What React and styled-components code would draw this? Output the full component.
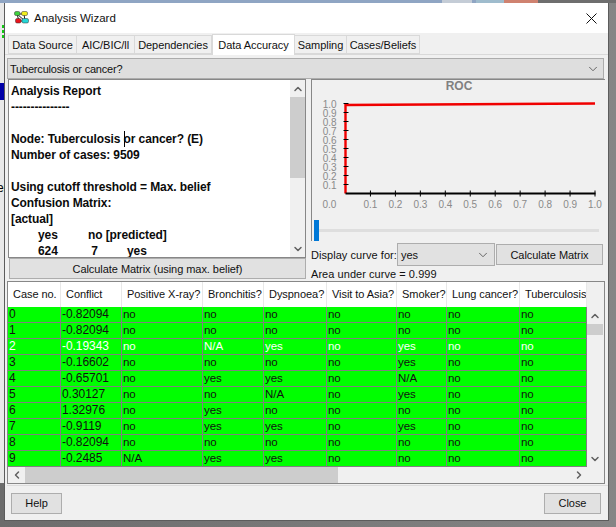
import React from 'react';
import styled, { createGlobalStyle } from 'styled-components';
import { ChevronUp, ChevronDown, ChevronLeft, ChevronRight } from 'lucide-react';

const tabs = ['Data Source', 'AIC/BIC/ll', 'Dependencies', 'Data Accuracy', 'Sampling', 'Cases/Beliefs'];
const tabWidths = [69, 58, 77, 83, 52, 73];

const columns = [
  { name: 'Case no.', width: 53 },
  { name: 'Conflict', width: 61 },
  { name: 'Positive X-ray?', width: 81 },
  { name: 'Bronchitis?', width: 61 },
  { name: 'Dyspnoea?', width: 63 },
  { name: 'Visit to Asia?', width: 70 },
  { name: 'Smoker?', width: 50 },
  { name: 'Lung cancer?', width: 73 },
  { name: 'Tuberculosis?', width: 67 },
];
const gridColumns = columns.map((c) => `${c.width}px`).join(' ');

const rows = [
  ['0', '-0.82094', 'no', 'no', 'no', 'no', 'no', 'no', 'no'],
  ['1', '-0.82094', 'no', 'no', 'no', 'no', 'no', 'no', 'no'],
  ['2', '-0.19343', 'no', 'N/A', 'yes', 'no', 'yes', 'no', 'no'],
  ['3', '-0.16602', 'no', 'no', 'no', 'no', 'yes', 'no', 'no'],
  ['4', '-0.65701', 'no', 'yes', 'yes', 'no', 'N/A', 'no', 'no'],
  ['5', '0.30127', 'no', 'no', 'N/A', 'no', 'yes', 'no', 'no'],
  ['6', '1.32976', 'no', 'yes', 'no', 'no', 'no', 'no', 'no'],
  ['7', '-0.9119', 'no', 'yes', 'yes', 'no', 'yes', 'no', 'no'],
  ['8', '-0.82094', 'no', 'no', 'no', 'no', 'no', 'no', 'no'],
  ['9', '-0.2485', 'N/A', 'yes', 'yes', 'no', 'no', 'no', 'no'],
];

const GlobalStyle = createGlobalStyle`
  html, body {
    margin: 0;
    padding: 0;
    background: #787878;
  }
  * {
    box-sizing: border-box;
  }
  body {
    font-family: "Liberation Sans", Arial, sans-serif;
    font-size: 11px;
    letter-spacing: -0.05px;
    color: #000;
  }
`;

const Desktop = styled.div`
  position: relative;
  width: 616px;
  height: 527px;
  padding: 3px 0 0 4px;
  overflow: hidden;
  background: linear-gradient(90deg, #6c6c6c 0, #858585 100%);
`;

const TopStrip = styled.div`
  position: absolute;
  top: 0;
  left: 0;
  width: 100%;
  height: 3px;
  background: linear-gradient(
    90deg,
    #8fa5c3 0 442px,
    #c4ccd6 442px 472px,
    #8fa5c3 472px 476px,
    #9fbccd 476px 504px,
    #cf8270 504px 538px,
    #6e6e6e 538px
  );
`;

const LeftStrip = styled.div`
  position: absolute;
  top: 3px;
  left: 0;
  width: 4px;
  height: 480px;
  background: #e9e9e9;
`;

const GreenDots = styled.div`
  position: absolute;
  top: 22px;
  left: 2px;
  width: 2px;
  height: 14px;
  background: repeating-linear-gradient(180deg, #12c912 0 3px, transparent 3px 5px);
`;

const BlueBar = styled.div`
  position: absolute;
  top: 80px;
  left: 0;
  width: 4px;
  height: 17px;
  background: #0000a8;
`;

const StrayText = styled.div`
  position: absolute;
  top: 178px;
  left: -3px;
  width: 7px;
  overflow: hidden;
  font-size: 12px;
`;

const Window = styled.div`
  width: 605px;
  height: 518px;
  background: #f0f0f0;
  border: 1px solid #5c5c5c;
  border-top: none;
  display: flex;
  flex-direction: column;
`;

const TitleBar = styled.div`
  height: 30px;
  flex: none;
  background: #fff;
  display: flex;
  align-items: center;
  padding: 0 11px 0 9px;
`;

const TitleText = styled.span`
  margin-left: 4px;
  flex: 1;
  font-size: 11.5px;
  letter-spacing: 0;
  color: #111;
`;

const TabStrip = styled.div`
  height: 21px;
  flex: none;
  display: flex;
  align-items: flex-end;
  padding-left: 3px;
  position: relative;
  z-index: 1;
`;

const Tab = styled.div`
  width: ${(p) => p.$width}px;
  height: ${(p) => (p.$active ? 21 : 19)}px;
  margin-bottom: ${(p) => (p.$active ? -1 : 0)}px;
  background: ${(p) => (p.$active ? '#fff' : '#f0f0f0')};
  border: 1px solid #d9d9d9;
  border-bottom: ${(p) => (p.$active ? 'none' : '1px solid #d9d9d9')};
  border-left: ${(p) => (p.$first || p.$active ? '1px solid #d9d9d9' : 'none')};
  display: flex;
  align-items: center;
  justify-content: center;
  padding-top: ${(p) => (p.$active ? 0 : 1)}px;
  white-space: nowrap;
  color: #111;
`;

const TabPanel = styled.div`
  flex: 1;
  min-height: 0;
  padding: 3px 0 0 2px;
  border-top: 1px solid #d9d9d9;
  display: flex;
  flex-direction: column;
`;

const NodeSelect = styled.div`
  width: 597px;
  height: 21px;
  flex: none;
  background: #dedede;
  border: 1px solid #acacac;
  display: flex;
  align-items: center;
  justify-content: space-between;
  padding: 0 3px 0 2px;
  letter-spacing: -0.2px;
  color: #111;
`;

const TopRow = styled.div`
  display: flex;
  gap: 5px;
  padding-left: 1px;
  height: 201px;
  flex: none;
`;

const ReportColumn = styled.div`
  width: 298px;
  display: flex;
  flex-direction: column;
`;

const ReportBox = styled.div`
  height: 179px;
  flex: none;
  display: flex;
  background: #fff;
  border: 1px solid #878787;
`;

const ReportText = styled.div`
  flex: 1;
  min-width: 0;
  overflow: hidden;
  padding: 3px 0 0 2px;
  font-size: 12px;
  font-weight: bold;
  letter-spacing: -0.1px;
  line-height: 16px;
  color: #0b0b0b;
`;

const ReportLine = styled.div`
  height: 16px;
  white-space: pre;
`;

const MatrixLine = styled.div`
  height: 16px;
  display: grid;
  grid-template-columns: 27px 50px 39px auto;
  white-space: pre;
`;

const Caret = styled.span`
  display: inline-block;
  width: 1px;
  height: 16px;
  margin-right: -1px;
  vertical-align: top;
  background: #000;
`;

const WideButton = styled.div`
  width: ${(p) => p.$width || 297}px;
  height: 21px;
  flex: none;
  margin-left: ${(p) => p.$left || 0}px;
  margin-top: ${(p) => p.$top || 0}px;
  background: #e1e1e1;
  border: 1px solid #adadad;
  display: flex;
  align-items: center;
  justify-content: center;
  color: #111;
`;

const VScroll = styled.div`
  width: ${(p) => p.$width}px;
  flex: none;
  margin-top: ${(p) => p.$top || 0}px;
  display: flex;
  flex-direction: column;
  background: #f0f0f0;
`;

const HScroll = styled.div`
  height: 16px;
  width: 579px;
  flex: none;
  display: flex;
  background: #f0f0f0;
`;

const ArrowBox = styled.div`
  width: ${(p) => (p.$horizontal ? '17px' : 'auto')};
  height: ${(p) => (p.$horizontal ? 'auto' : '17px')};
  flex: none;
  display: flex;
  align-items: center;
  justify-content: center;
  color: #606060;
`;

const Thumb = styled.div`
  flex: none;
  background: #cdcdcd;
  width: ${(p) => (p.$horizontal ? `${p.$length}px` : 'auto')};
  height: ${(p) => (p.$horizontal ? 'auto' : `${p.$length}px`)};
`;

const Spacer = styled.div`
  flex: 1;
`;

const ChartColumn = styled.div`
  width: 294px;
  display: flex;
  flex-direction: column;
`;

const PlotFrame = styled.div`
  border-left: 1px solid #878787;
  border-top: 1px solid #878787;
  flex: none;
`;

const ChartArea = styled.svg`
  display: block;
  width: 293px;
  height: 139px;
`;

const Slider = styled.div`
  height: 22px;
  display: flex;
  align-items: center;
  padding-left: 2px;
`;

const SliderThumb = styled.div`
  width: 5px;
  height: 21px;
  background: #0078d7;
`;

const SliderTrack = styled.div`
  width: 280px;
  height: 3px;
  background: #dedede;
`;

const CurveRow = styled.div`
  height: 23px;
  margin-top: 2px;
  flex: none;
  display: flex;
  align-items: center;
  color: #111;
`;

const CurveLabel = styled.span`
  width: 86px;
  flex: none;
  white-space: nowrap;
  letter-spacing: 0.05px;
`;

const CurveSelect = styled.div`
  width: 98px;
  height: 23px;
  flex: none;
  background: #e1e1e1;
  border: 1px solid #adadad;
  display: flex;
  align-items: center;
  justify-content: space-between;
  padding: 0 4px 0 3px;
  color: #111;
`;

const AreaLabel = styled.div`
  margin-top: 1px;
  height: 14px;
  line-height: 14px;
  letter-spacing: 0.05px;
  color: #111;
`;

const TablePanel = styled.div`
  width: 598px;
  height: 203px;
  margin-top: 1px;
  flex: none;
  display: flex;
  flex-direction: column;
  border: 1px solid #878787;
  position: relative;
`;

const TableMain = styled.div`
  display: flex;
  height: 185px;
  flex: none;
`;

const TableGrid = styled.div`
  width: 579px;
  flex: none;
`;

const HeaderRow = styled.div`
  display: grid;
  grid-template-columns: ${gridColumns};
  height: 25px;
  background: #fff;
`;

const HeaderCell = styled.div`
  padding-left: 5px;
  line-height: 25px;
  white-space: nowrap;
  overflow: hidden;
  border-right: 1px solid #e8e8e8;
  color: #111;
`;

const DataRow = styled.div`
  display: grid;
  grid-template-columns: ${gridColumns};
  height: 16px;
  background: #00ff00;
  border-bottom: 1px solid #808080;
  color: ${(p) => (p.$selected ? '#fff' : '#111')};
`;

const DataCell = styled.div`
  padding-left: 1px;
  line-height: 15px;
  border-right: 1px solid #808080;
  white-space: nowrap;
  overflow: hidden;
  font-size: ${(p) => (p.$numeric ? 12 : 11.5)}px;
`;

const Footer = styled.div`
  flex: 1;
  margin-top: 1px;
  border-top: 1px solid #dcdcdc;
  display: flex;
  align-items: center;
  justify-content: space-between;
  padding: 0 7px 0 4px;
`;

const FooterButton = styled.div`
  width: ${(p) => p.$width}px;
  height: 21px;
  background: #e1e1e1;
  border: 1px solid #adadad;
  display: flex;
  align-items: center;
  justify-content: center;
  color: #111;
`;

const AppIcon = () => (
  <svg width="16" height="14" viewBox="0 0 16 14">
    <path d="M3 3L5 10M3 3H10M10 3L11 10M5 10H11M3 3L11 10" stroke="#222" strokeWidth="1" fill="none" />
    <rect x="0.5" y="0.5" width="5.5" height="4" rx="1.5" fill="#3fd13f" stroke="#333" strokeWidth="0.5" />
    <rect x="7.5" y="0.5" width="6" height="4" rx="1.5" fill="#f2f01e" stroke="#333" strokeWidth="0.5" />
    <rect x="1.5" y="7.5" width="5.5" height="4.5" rx="1.5" fill="#e8141c" stroke="#333" strokeWidth="0.5" />
    <rect x="8" y="7.5" width="6.5" height="4.5" rx="1.5" fill="#25d6d6" stroke="#333" strokeWidth="0.5" />
  </svg>
);

const CloseIcon = () => (
  <svg width="11" height="11" viewBox="0 0 11 11">
    <path d="M0.5 0.5L10.5 10.5M10.5 0.5L0.5 10.5" stroke="#111" strokeWidth="1" fill="none" />
  </svg>
);

const RocChart = () => {
  const ticks = [1, 2, 3, 4, 5, 6, 7, 8, 9, 10];
  // chart origin inside the svg: axis corner
  const ox = 33.5;
  const oy = 113.5;
  return (
    <ChartArea viewBox="0 0 293 139">
      <text x="147" y="10" textAnchor="middle" fontSize="12" fontWeight="bold" fill="#808080" fontFamily="Liberation Sans">
        ROC
      </text>
      {ticks.map((t) => (
        <text key={t} x={ox - 9} y={oy - t * 9 + 4.5} textAnchor="end" fontSize="10" fill="#8a8a8a" fontFamily="Liberation Sans">
          {(t / 10).toFixed(1)}
        </text>
      ))}
      {ticks.map((t) => (
        <text key={t} x={ox + t * 24.95} y={oy + 14} textAnchor="middle" fontSize="10" fill="#8a8a8a" fontFamily="Liberation Sans">
          {(t / 10).toFixed(1)}
        </text>
      ))}
      <text x={ox - 16} y={oy + 14} textAnchor="middle" fontSize="10" fill="#8a8a8a" fontFamily="Liberation Sans">
        0.0
      </text>
      <polyline points={`${ox},${oy} ${ox},${oy - 88.5} ${ox + 249.5},${oy - 90}`} stroke="#f00000" strokeWidth="2.4" fill="none" />
      <line x1={ox} x2={ox + 250} y1={oy} y2={oy} stroke="#000" strokeWidth="2" />
      {ticks.map((t) => (
        <line key={t} x1={ox - 2} x2={ox + 3} y1={oy - t * 9} y2={oy - t * 9} stroke="#000" strokeWidth="1" />
      ))}
      {ticks.map((t) => (
        <line key={t} x1={ox + t * 24.95} x2={ox + t * 24.95} y1={oy - 3} y2={oy + 3} stroke="#000" strokeWidth="1" />
      ))}
    </ChartArea>
  );
};

const App = () => (
  <>
    <GlobalStyle />
    <Desktop>
      <TopStrip />
      <LeftStrip>
        <GreenDots />
        <BlueBar />
        <StrayText>er</StrayText>
      </LeftStrip>
      <Window>
        <TitleBar>
          <AppIcon />
          <TitleText>Analysis Wizard</TitleText>
          <CloseIcon />
        </TitleBar>
        <TabStrip>
          {tabs.map((tab, i) => (
            <Tab key={tab} $width={tabWidths[i]} $active={tab === 'Data Accuracy'} $first={i === 0}>
              {tab}
            </Tab>
          ))}
        </TabStrip>
        <TabPanel>
          <NodeSelect>
            <span>Tuberculosis or cancer?</span>
            <ChevronDown size={14} strokeWidth={1.5} color="#555" />
          </NodeSelect>
          <TopRow>
            <ReportColumn>
              <ReportBox>
                <ReportText>
                  <ReportLine>Analysis Report</ReportLine>
                  <ReportLine>---------------</ReportLine>
                  <ReportLine> </ReportLine>
                  <ReportLine>
                    Node: Tuberculosis <Caret />or cancer? (E)
                  </ReportLine>
                  <ReportLine>Number of cases: 9509</ReportLine>
                  <ReportLine> </ReportLine>
                  <ReportLine>Using cutoff threshold = Max. belief</ReportLine>
                  <ReportLine>Confusion Matrix:</ReportLine>
                  <ReportLine>[actual]</ReportLine>
                  <MatrixLine>
                    <span />
                    <span>yes</span>
                    <span>no [predicted]</span>
                  </MatrixLine>
                  <MatrixLine>
                    <span />
                    <span>624</span>
                    <span> 7</span>
                    <span>yes</span>
                  </MatrixLine>
                </ReportText>
                <VScroll $width={15}>
                  <ArrowBox>
                    <ChevronUp size={12} strokeWidth={3} />
                  </ArrowBox>
                  <Thumb $length={81} />
                  <Spacer />
                  <ArrowBox>
                    <ChevronDown size={12} strokeWidth={3} />
                  </ArrowBox>
                </VScroll>
              </ReportBox>
              <WideButton $left={1}>Calculate Matrix (using max. belief)</WideButton>
            </ReportColumn>
            <ChartColumn>
              <PlotFrame>
                <RocChart />
                <Slider>
                  <SliderThumb />
                  <SliderTrack />
                </Slider>
              </PlotFrame>
              <CurveRow>
                <CurveLabel>Display curve for:</CurveLabel>
                <CurveSelect>
                  <span>yes</span>
                  <ChevronDown size={14} strokeWidth={1.5} color="#555" />
                </CurveSelect>
                <WideButton $width={107} $left={1}>Calculate Matrix</WideButton>
              </CurveRow>
              <AreaLabel>Area under curve = 0.999</AreaLabel>
            </ChartColumn>
          </TopRow>
          <TablePanel>
            <TableMain>
              <TableGrid>
                <HeaderRow>
                  {columns.map((c) => (
                    <HeaderCell key={c.name}>{c.name}</HeaderCell>
                  ))}
                </HeaderRow>
                {rows.map((row, i) => (
                  <DataRow key={row[0]} $selected={i === 2}>
                    {row.map((value, j) => (
                      <DataCell key={j} $numeric={j < 2}>{value}</DataCell>
                    ))}
                  </DataRow>
                ))}
              </TableGrid>
              <VScroll $width={16} $top={25}>
                <ArrowBox>
                  <ChevronUp size={12} strokeWidth={3} />
                </ArrowBox>
                <Thumb $length={11} />
                <Spacer />
                <ArrowBox>
                  <ChevronDown size={12} strokeWidth={3} />
                </ArrowBox>
              </VScroll>
            </TableMain>
            <HScroll>
              <ArrowBox $horizontal>
                <ChevronLeft size={12} strokeWidth={3} />
              </ArrowBox>
              <Thumb $horizontal $length={313} />
              <Spacer />
              <ArrowBox $horizontal>
                <ChevronRight size={12} strokeWidth={3} />
              </ArrowBox>
            </HScroll>
          </TablePanel>
          <Footer>
            <FooterButton $width={51}>Help</FooterButton>
            <FooterButton $width={57}>Close</FooterButton>
          </Footer>
        </TabPanel>
      </Window>
    </Desktop>
  </>
);

export default App;
